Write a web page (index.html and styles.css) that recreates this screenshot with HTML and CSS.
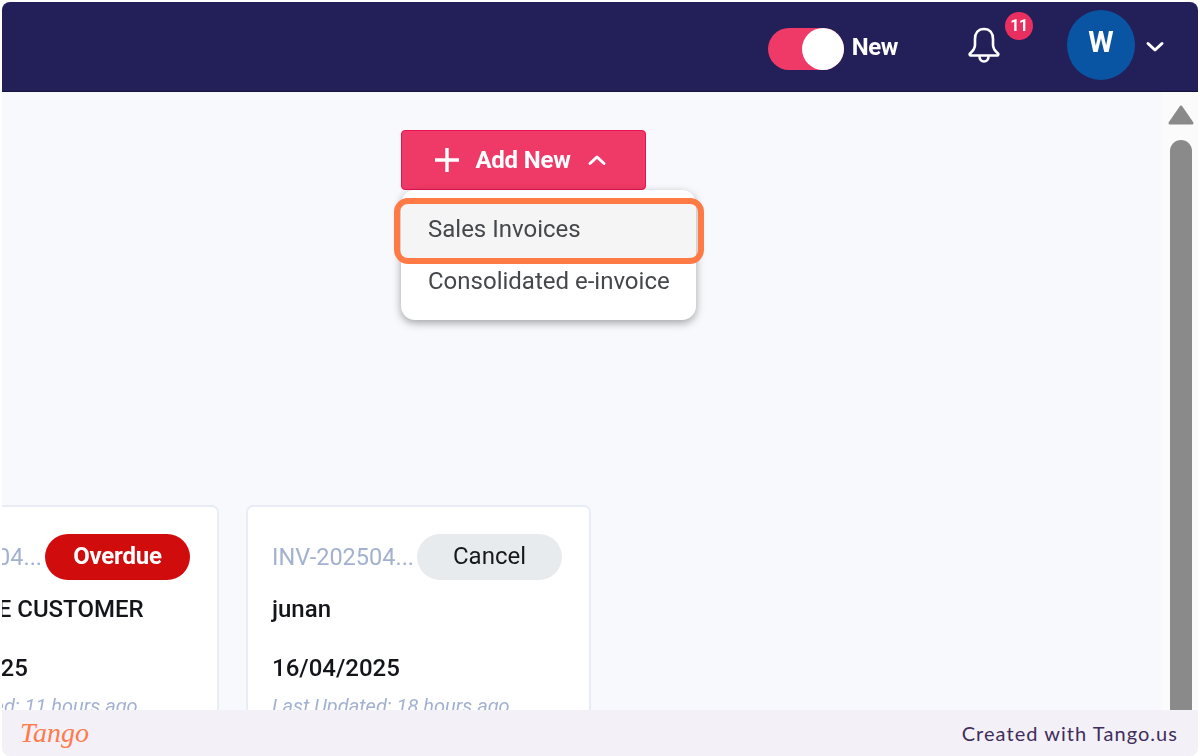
FILE: index.html
```html
<!DOCTYPE html>
<html>
<head>
<meta charset="UTF-8" />
<title>Invoices</title>
<link rel="stylesheet" href="styles.css">
</head>
<body>
<div class="frame">
  <div class="topbar">
    <div class="toggle"><span class="knob"></span></div>
    <span class="toggle-label">New</span>
    <div class="bell">
      <svg width="36" height="38" viewBox="0 0 36 38" fill="none" stroke="#fff" stroke-width="2.6" stroke-linejoin="round" stroke-linecap="round">
        <path d="M18 3c-6 0-9 4.500-9 10v6c0 3-1.500 5.500-5 8.500-.8.8-.3 2 .8 2h26.400c1.100 0 1.600-1.200.8-2-3.500-3-5-5.500-5-8.500v-6c0-5.500-3-10-9-10z"/>
        <path d="M13.500 30.500c0 3 2 5 4.500 5s4.500-2 4.500-5"/>
      </svg>
      <span class="badge">11</span>
    </div>
    <div class="avatar">W</div>
    <svg class="caret" width="20" height="12" viewBox="0 0 20 12" fill="none" stroke="#fff" stroke-width="3" stroke-linecap="round" stroke-linejoin="round"><path d="M3 2.500l7 6.500 7-6.500"/></svg>
  </div>

  <div class="content">
    <div class="main">
      <div class="actions">
        <button class="add-btn">
          <svg width="28" height="28" viewBox="0 0 28 28" stroke="#fff" stroke-width="3.400"><path d="M14 2v24M2 14h24"/></svg>
          <span>Add New</span>
          <svg class="add-caret" width="20" height="12" viewBox="0 0 20 12" fill="none" stroke="#fff" stroke-width="3" stroke-linecap="round" stroke-linejoin="round"><path d="M3 9.500l7-6.500 7 6.500"/></svg>
        </button>
        <div class="menu">
          <div class="menu-item active">Sales Invoices</div>
          <div class="menu-item">Consolidated e-invoice</div>
          <div class="focus-ring"></div>
        </div>
      </div>

      <div class="cards">
        <div class="card">
          <div class="card-head">
            <span class="inv-no">INV-202504...</span>
            <span class="pill overdue">Overdue</span>
          </div>
          <div class="card-name">ONE-TIME CUSTOMER</div>
          <div class="card-date">16/04/2025</div>
          <div class="card-updated">Last Updated: 11 hours ago</div>
        </div>
        <div class="card">
          <div class="card-head">
            <span class="inv-no">INV-202504...</span>
            <span class="pill cancel">Cancel</span>
          </div>
          <div class="card-name">junan</div>
          <div class="card-date">16/04/2025</div>
          <div class="card-updated">Last Updated: 18 hours ago</div>
        </div>
      </div>
    </div>
    <div class="scrollbar">
      <svg class="arrow-up" width="28" height="22" viewBox="0 0 28 22" fill="#8a8a8a" stroke="#8a8a8a" stroke-width="3" stroke-linejoin="round"><path d="M14 3L25 19H3z"/></svg>
      <div class="thumb"></div>
    </div>
  </div>

  <div class="footer">
    <span class="tango-logo">Tango</span>
    <span class="tango-credit">Created with Tango.us</span>
  </div>
</div>
</body>
</html>
```

FILE: styles.css
```css
* {
	box-sizing: border-box;
}

html, body {
	margin: 0;
	height: 100%;
	background: #fff;
	font-family: Roboto, "Liberation Sans", sans-serif;
}

.frame {
	height: 756px;
	padding: 2px 2px 0;
	display: flex;
	flex-direction: column;
	overflow: hidden;
}

/* top bar */
.topbar {
	flex: none;
	height: 90px;
	background: #221f59;
	border-bottom: 1px solid #16133f;
	border-radius: 8px 8px 0 0;
	padding-right: 33px;
	display: flex;
	align-items: center;
	justify-content: flex-end;
	color: #fff;
	filter: blur(0.4px);
}

.toggle {
	width: 76px;
	height: 42px;
	margin-top: 4px;
	border-radius: 21px;
	background: #ef3a68;
	display: flex;
	justify-content: flex-end;
}

.knob {
	width: 42px;
	height: 42px;
	border-radius: 50%;
	background: #fff;
}

.toggle-label {
	margin-left: 8px;
	font-size: 24px;
	font-weight: 700;
	letter-spacing: -0.4px;
}

.bell {
	position: relative;
	margin-left: 68px;
	margin-bottom: 4px;
	height: 38px;
}

.badge {
	position: absolute;
	left: 39px;
	top: -14px;
	width: 28px;
	height: 28px;
	border-radius: 50%;
	background: #e92f60;
	font-size: 16px;
	font-weight: 700;
	letter-spacing: -0.5px;
	line-height: 28px;
	text-align: center;
}

.avatar {
	margin-left: 65px;
	margin-bottom: 4px;
	width: 68px;
	height: 70px;
	border-radius: 50%;
	background: #0a55a3;
	font-size: 29px;
	font-weight: 700;
	line-height: 64px;
	text-align: center;
}

.caret {
	margin-left: 10px;
}

/* page body */
.content {
	flex: 1;
	min-height: 0;
	display: flex;
	overflow: hidden;
	background: #f8f9fd;
	filter: blur(0.4px);
}

.main {
	flex: 1;
	min-width: 0;
	overflow: hidden;
	padding-top: 38px;
}

.actions {
	position: relative;
	width: 245px;
	margin-left: 399px;
}

.add-btn {
	width: 245px;
	height: 60px;
	padding: 0 7px 0 0;
	border: 1px solid #e9124f;
	border-radius: 4px;
	background: #ef3a68;
	color: #fff;
	font-family: inherit;
	font-size: 24px;
	font-weight: 700;
	letter-spacing: -0.2px;
	display: flex;
	align-items: center;
	justify-content: center;
	gap: 14px;
}

.add-caret {
	margin-left: 2px;
}

.menu {
	position: absolute;
	left: 0;
	top: 60px;
	width: 295px;
	height: 130px;
	padding-top: 12px;
	background: #fff;
	border-radius: 14px;
	box-shadow: 0 3px 8px rgba(0, 0, 0, 0.35);
}

.menu-item {
	height: 56px;
	padding-left: 27px;
	line-height: 54px;
	font-size: 24px;
	color: #45474b;
}

.menu-item.active {
	background: #f5f5f5;
}

.menu-item + .menu-item {
	height: 46px;
	line-height: 46px;
}

.focus-ring {
	position: absolute;
	left: -7px;
	top: 8px;
	width: 310px;
	height: 66px;
	border: 6px solid #ff7a45;
	border-radius: 14px;
}

/* invoice cards */
.cards {
	display: flex;
	gap: 27px;
	margin-left: -128px;
	margin-top: 315px;
}

.card {
	flex: none;
	width: 345px;
	height: 300px;
	padding: 27px 24px;
	background: #fff;
	border: 2px solid #e8ecf7;
	border-radius: 7px;
}

.card-head {
	display: flex;
	align-items: center;
	height: 46px;
}

.inv-no {
	width: 145px;
	font-size: 23.5px;
	color: #a3b1d1;
	white-space: nowrap;
}

.pill {
	flex: none;
	width: 145px;
	height: 46px;
	border-radius: 23px;
	line-height: 45px;
	font-size: 24px;
	text-align: center;
}

.overdue {
	background: #d00c0c;
	color: #fff;
	font-weight: 700;
	letter-spacing: -0.2px;
}

.cancel {
	background: #e8ebee;
	color: #17181a;
}

.card-name {
	margin-top: 14px;
	font-size: 24px;
	font-weight: 500;
	line-height: 30px;
	color: #14151a;
	white-space: nowrap;
}

.card-date {
	margin-top: 29px;
	font-size: 24px;
	font-weight: 500;
	line-height: 30px;
	color: #14151a;
}

.card-updated {
	margin-top: 11px;
	font-size: 20px;
	font-style: italic;
	color: #a3b1d1;
}

/* scrollbar */
.scrollbar {
	flex: none;
	width: 36px;
	background: #fbfbfc;
	padding: 12px 0 0 5px;
}

.arrow-up {
	display: block;
}

.thumb {
	width: 22px;
	height: 600px;
	margin: 14px 0 0 3px;
	border-radius: 11px;
	background: #8a8a8a;
}

/* tango footer */
.footer {
	flex: none;
	height: 46px;
	padding: 0 20px 0 18px;
	background: #f3f1f7;
	border-radius: 0 0 8px 8px;
	display: flex;
	align-items: center;
	justify-content: space-between;
}

.tango-logo {
	font-family: "Liberation Serif", serif;
	font-style: italic;
	font-size: 28px;
	color: #ff7a4d;
}

.tango-credit {
	font-family: Lato, sans-serif;
	font-size: 20px;
	letter-spacing: 1.05px;
	color: #3f2d5c;
}
```
